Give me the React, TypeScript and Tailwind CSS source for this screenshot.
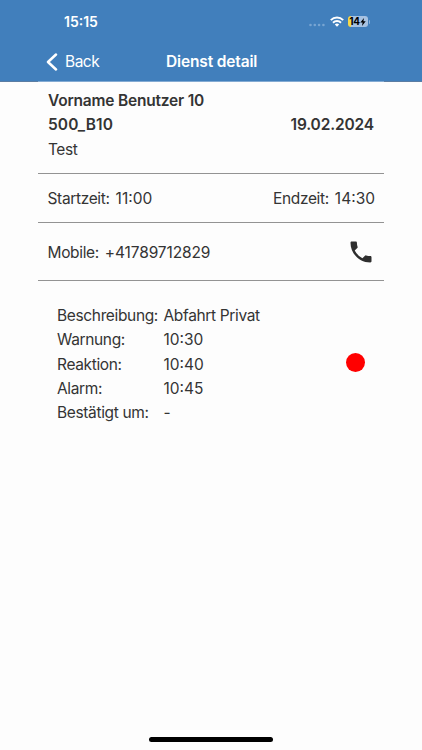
import React from "react";

const entries = [
  ["Beschreibung:", "Abfahrt Privat"],
  ["Warnung:", "10:30"],
  ["Reaktion:", "10:40"],
  ["Alarm:", "10:45"],
  ["Bestätigt um:", "-"],
];

function Field({ label, value }: { label: string; value: string }) {
  return (
    <div className="flex gap-[6px]">
      <span className="tracking-[-0.35px]">{label}</span>
      <span className={value.length > 5 ? "tracking-[-0.12px]" : "tracking-normal"}>{value}</span>
    </div>
  );
}

export default function App() {
  return (
    <div className="flex h-[750px] w-[422px] flex-col overflow-hidden bg-[#fdfdfd] font-['Inter',sans-serif] text-[15.5px] text-[#343434]">
      <header className="flex h-[82px] shrink-0 flex-col bg-[#417fbc] text-white">
        <div className="flex h-[43px] items-center justify-between pr-[52px] pl-[64px]">
          <span className="text-[14px] font-semibold">15:15</span>
          <div className="flex items-center">
            <svg className="mt-[7px] mr-[5px]" width="16" height="4" viewBox="0 0 16 4" fill="#78a5d2">
              <circle cx="1.5" cy="2" r="1.3" /><circle cx="5.8" cy="2" r="1.3" /><circle cx="10.1" cy="2" r="1.3" /><circle cx="14.4" cy="2" r="1.3" />
            </svg>
            <svg className="mr-[4px]" width="14" height="11" viewBox="0 0 14 11" fill="none" stroke="white" strokeWidth="2">
              <path d="M.8 4.1a8.9 8.9 0 0 1 12.4 0M3 6.7a5.8 5.8 0 0 1 8 0" />
              <path d="M7 10.7L4.8 8.5a3.2 3.2 0 0 1 4.4 0z" fill="white" stroke="none" />
            </svg>
            <div className="flex h-[11px] w-[20px] items-center justify-center overflow-hidden rounded-[3px] bg-linear-to-r from-[#f4d84b] from-15% to-[#a6c2e2] to-15% text-[10px] font-bold tracking-[-0.3px] text-black">
              <span>14</span>
              <svg width="6" height="8" viewBox="0 0 6 8" fill="black"><path d="M4 0L.3 4.6h2.3L2 8l3.7-4.7H3.4z" /></svg>
            </div>
            <span className="ml-[1px] h-[4px] w-[1.5px] rounded-r-full bg-[#8db2da]" />
          </div>
        </div>
        <div className="grid h-[37px] grid-cols-[166px_1fr] items-center">
          <div className="flex items-center gap-[7px] pl-[46px]">
            <svg width="12" height="18" viewBox="0 0 12 18" fill="none" stroke="white" strokeWidth="2.5" strokeLinecap="round" strokeLinejoin="round"><path d="M10 1.5L2 9l8 7.5" /></svg>
            <span className="tracking-[-0.5px]">Back</span>
          </div>
          <span className="font-semibold tracking-[-0.15px]">Dienst detail</span>
        </div>
        <div className="mt-auto h-px bg-[#5b7da3] px-[38px]"><div className="h-px bg-[#83aad2]" /></div>
      </header>
      <main className="mx-[38px]">
        <section className="h-[92px] border-b border-[#939393] px-[10px] pt-[7px] leading-[24.4px]">
          <div className="font-semibold tracking-[-0.2px]">Vorname Benutzer 10</div>
          <div className="flex justify-between font-semibold"><span className="tracking-[0.1px]">500_B10</span><span className="tracking-[-0.15px]">19.02.2024</span></div>
          <div className="tracking-[-0.45px]">Test</div>
        </section>
        <section className="flex h-[49px] items-center justify-between border-b border-[#939393] pt-px pr-[9px] pl-[9.5px]">
          <Field label="Startzeit:" value="11:00" />
          <Field label="Endzeit:" value="14:30" />
        </section>
        <section className="flex h-[58px] items-center justify-between border-b border-[#939393] pr-[9px] pl-[9.5px]">
          <div className="-space-x-px pt-[2px]"><Field label="Mobile:" value="+41789712829" /></div>
          <svg width="28" height="28" viewBox="0 0 24 24" fill="#2e2e2e"><path d="M20 15.5c-1.25 0-2.45-.2-3.57-.57a1.02 1.02 0 0 0-1.02.24l-2.2 2.2a15.05 15.05 0 0 1-6.59-6.58l2.2-2.21a.96.96 0 0 0 .25-1A11.4 11.4 0 0 1 8.5 4c0-.55-.45-1-1-1H4c-.55 0-1 .45-1 1 0 9.39 7.61 17 17 17 .55 0 1-.45 1-1v-3.5c0-.55-.45-1-1-1z" /></svg>
        </section>
        <section className="flex items-center justify-between px-[19px] pt-[23px]">
          <dl className="leading-[24.25px]">
            {entries.map(([k, v]) => (
              <div className="grid grid-cols-[106.5px_auto]" key={k}>
                <dt className="tracking-[-0.35px]">{k}</dt>
                <dd className={/\d/.test(v) ? "" : "tracking-[-0.35px]"}>{v}</dd>
              </div>
            ))}
          </dl>
          <span className="mb-[4px] size-[19px] rounded-full bg-[#ff0000]" />
        </section>
      </main>
      <div className="mt-auto mb-[8px] h-[5px] w-[124px] self-center rounded-full bg-black" />
    </div>
  );
}
